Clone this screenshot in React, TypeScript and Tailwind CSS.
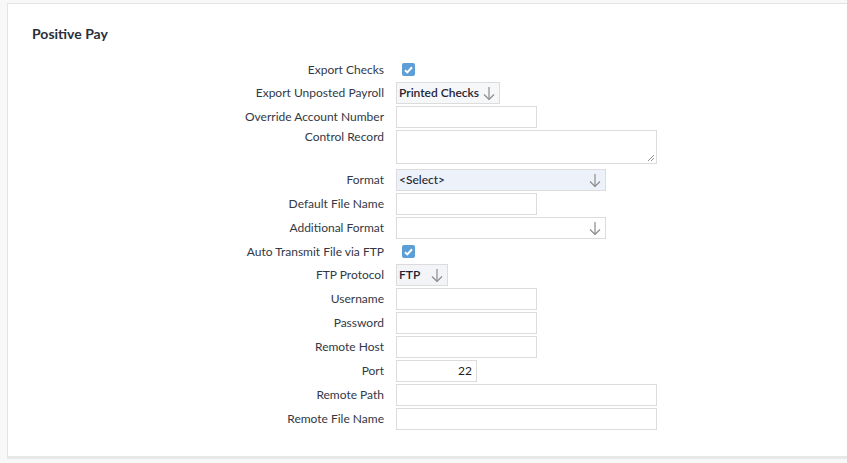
import React from "react";

const font = { fontFamily: "Lato, 'Open Sans', sans-serif" };

function Arrow() {
  return (
    <svg width="12" height="15" viewBox="0 0 12 15" fill="none" stroke="#8a8a8a" strokeWidth="1.2">
      <path d="M6 1v12.5" />
      <path d="M1 8.5l5 5 5-5" />
    </svg>
  );
}

function Check() {
  return (
    <span className="ml-[6px] w-[13px] h-[13px] rounded-[2px] bg-[#5e9ed6] flex items-center justify-center">
      <svg width="9" height="8" viewBox="0 0 9 8" fill="none" stroke="white" strokeWidth="2">
        <path d="M1 4.2l2.3 2.2L8 1.3" />
      </svg>
    </span>
  );
}

function Input({ w, value, right }: { w: string; value?: string; right?: boolean }) {
  return (
    <div
      className={`${w} h-[22px] border border-[#dcdcdc] bg-white text-[12px] text-[#222] px-1 flex items-center ${
        right ? "justify-end" : ""
      }`}
    >
      {value}
    </div>
  );
}

function Select({ w, text, bg, bold }: { w: string; text?: string; bg: string; bold?: boolean }) {
  return (
    <div className={`${w} ${bg} h-[22px] border border-[#dcdcdc] flex items-center justify-between pl-[2px] pr-[4px]`}>
      <span className={`text-[12px] text-[#1f2533] ${bold ? "font-semibold" : "font-medium"}`}>{text}</span>
      <Arrow />
    </div>
  );
}

type Row = { label: string; control: React.ReactNode; kind?: "tall" | "check" };

export default function App() {
  const rows: Row[] = [
    { label: "Export Checks", kind: "check", control: <Check /> },
    { label: "Export Unposted Payroll", control: <Select w="w-[104px]" bg="bg-[#f6f7f9]" text="Printed Checks" bold /> },
    { label: "Override Account Number", control: <Input w="w-[141px]" /> },
    {
      label: "Control Record",
      kind: "tall",
      control: (
        <div className="relative w-[261px] h-[34px] border border-[#dcdcdc] bg-white">
          <svg className="absolute right-[1px] bottom-[1px]" width="8" height="8" viewBox="0 0 8 8" stroke="#888" strokeWidth="0.9">
            <path d="M7 1L1 7M7 4L4 7" />
          </svg>
        </div>
      ),
    },
    { label: "Format", control: <Select w="w-[210px]" bg="bg-[#edf2fa]" text="<Select>" /> },
    { label: "Default File Name", control: <Input w="w-[141px]" /> },
    { label: "Additional Format", control: <Select w="w-[210px]" bg="bg-white" text="" /> },
    { label: "Auto Transmit File via FTP", kind: "check", control: <Check /> },
    { label: "FTP Protocol", control: <Select w="w-[52px]" bg="bg-[#f2f4f7]" text="FTP" bold /> },
    { label: "Username", control: <Input w="w-[141px]" /> },
    { label: "Password", control: <Input w="w-[141px]" /> },
    { label: "Remote Host", control: <Input w="w-[141px]" /> },
    { label: "Port", control: <Input w="w-[81px]" value="22" right /> },
    { label: "Remote Path", control: <Input w="w-[261px]" /> },
    { label: "Remote File Name", control: <Input w="w-[261px]" /> },
  ];

  return (
    <div className="h-[463px] w-[847px] overflow-hidden bg-[#f8f8f8] pt-[3px] pl-[7px]" style={font}>
      <div className="w-[900px] h-[456px] bg-white border-l border-t border-[#e4e4e4] border-b-[3px] border-b-[#e8e8e8]">
        <h2 className="pl-6 pt-[21px] text-[14px] leading-[18px] font-bold text-[#2a2f3a]">Positive Pay</h2>
        <div className="mt-[16px] grid grid-cols-[376px_auto] gap-x-3 gap-y-[2px]">
          {rows.map((r) => (
            <React.Fragment key={r.label}>
              <div
                className={`text-right text-[12px] text-[#333845] ${
                  r.kind === "tall"
                    ? "h-[37px] leading-[14px]"
                    : r.kind === "check"
                    ? "h-[21px] leading-[21px]"
                    : "h-[22px] leading-[22px]"
                }`}
              >
                {r.label}
              </div>
              <div
                className={`flex ${
                  r.kind === "tall" ? "items-start h-[37px]" : r.kind === "check" ? "items-center h-[21px]" : "items-center h-[22px]"
                }`}
              >
                {r.control}
              </div>
            </React.Fragment>
          ))}
        </div>
      </div>
    </div>
  );
}
